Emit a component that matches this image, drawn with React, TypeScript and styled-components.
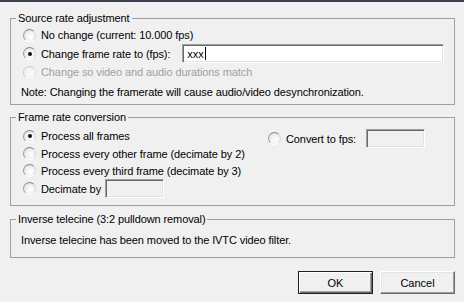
import * as React from "react";
import styled, { createGlobalStyle, css } from "styled-components";

const GlobalStyle = createGlobalStyle`
  html, body {
    margin: 0;
    padding: 0;
    background: #f0f0f0;
  }
  body {
    font-family: "Liberation Sans", Arial, sans-serif;
    font-size: 11px;
    letter-spacing: -0.1px;
    color: #000;
  }
`;

const Dialog = styled.div`
  width: 464px;
  height: 302px;
  box-sizing: border-box;
  border-top: 2px solid #3a4451;
  background: #f0f0f0;
  display: flex;
  flex-direction: column;
`;

const Group = styled.fieldset<{ $top: number }>`
  margin: ${(p) => p.$top}px 9px 0 10px;
  padding: 1px 5px 0 5px;
  border: 1px solid #a0a0a0;
  border-radius: 0;
  min-width: 0;
`;

const Legend = styled.legend`
  padding: 0 2px;
  line-height: 13px;
  font-size: 11px;
`;

const Body = styled.div<{ $pt?: number; $pb: number }>`
  display: flex;
  flex-direction: column;
  padding: ${(p) => p.$pt ?? 0}px 0 ${(p) => p.$pb}px 7px;
`;

const Row = styled.div<{ $h?: number }>`
  display: flex;
  align-items: center;
  height: ${(p) => p.$h ?? 18}px;
`;

const Option = styled.label<{ $disabled?: boolean }>`
  display: flex;
  align-items: center;
  gap: 5px;
  white-space: nowrap;
  color: ${(p) => (p.$disabled ? "#a0a0a0" : "#000")};
`;

const RadioDot = styled.span<{ $checked?: boolean; $disabled?: boolean }>`
  position: relative;
  width: 13px;
  height: 13px;
  box-sizing: border-box;
  border-radius: 50%;
  flex: none;
  border: 1px solid;
  border-color: #8a8a8a #d8d8d8 #ffffff #9a9a9a;
  background: radial-gradient(circle at 60% 60%, #ffffff 0%, #f2f2f2 45%, #d4d4d4 100%);
  ${(p) =>
    p.$disabled &&
    css`
      border-color: #c8c8c8 #e4e4e4 #f8f8f8 #cccccc;
      background: radial-gradient(circle at 60% 60%, #fafafa 0%, #eeeeee 100%);
    `}
  ${(p) =>
    p.$checked &&
    css`
      &::after {
        content: "";
        position: absolute;
        left: 3.5px;
        top: 3.5px;
        width: 4px;
        height: 4px;
        border-radius: 50%;
        background: #111;
      }
    `}
`;

const TextBox = styled.div<{ $w: number; $disabled?: boolean; $ml: number }>`
  width: ${(p) => p.$w}px;
  height: 19px;
  margin-left: ${(p) => p.$ml}px;
  box-sizing: border-box;
  border: 1px solid;
  border-color: #a0a0a0 #ffffff #ffffff #a0a0a0;
  box-shadow: inset 1px 1px 0 #696969, inset -1px -1px 0 #e3e3e3;
  background: ${(p) => (p.$disabled ? "#f0f0f0" : "#ffffff")};
  display: flex;
  align-items: center;
  padding-left: 4px;
`;

const Caret = styled.span`
  display: inline-block;
  width: 1px;
  height: 13px;
  background: #000;
  margin-left: 1px;
`;

const Note = styled.div`
  height: 16px;
  line-height: 16px;
  margin-top: 3px;
  margin-left: -2px;
`;

const Columns = styled.div`
  display: grid;
  grid-template-columns: 245px auto;
`;

const Side = styled(Row)`
  margin-top: 2px;
`;

const Info = styled.div`
  height: 16px;
  line-height: 16px;
  margin-top: 5px;
  padding-left: 5px;
  padding-bottom: 9px;
`;

const Buttons = styled.div`
  display: flex;
  justify-content: flex-end;
  gap: 7px;
  margin: 13px 9px 0 0;
`;

const Button = styled.button<{ $default?: boolean }>`
  width: 75px;
  height: 23px;
  box-sizing: border-box;
  font-family: "Liberation Sans", Arial, sans-serif;
  font-size: 11px;
  color: #000;
  background: #f0f0f0;
  padding: 0;
  border: 1px solid;
  border-color: #ffffff #696969 #696969 #ffffff;
  box-shadow: inset -1px -1px 0 #a0a0a0, inset 1px 1px 0 #e3e3e3;
  ${(p) =>
    p.$default &&
    css`
      border: 1px solid #202020;
      box-shadow: inset 1px 1px 0 #ffffff, inset -1px -1px 0 #696969,
        inset -2px -2px 0 #a0a0a0;
    `}
`;

export default function App() {
  return (
    <>
      <GlobalStyle />
      <Dialog>
        <Group $top={10}>
          <Legend>Source rate adjustment</Legend>
          <Body $pb={4}>
            <Row>
              <Option>
                <RadioDot />
                No change (current: 10.000 fps)
              </Option>
            </Row>
            <Row $h={19}>
              <Option>
                <RadioDot $checked />
                Change frame rate to (fps):
              </Option>
              <TextBox $w={262} $ml={12}>
                xxx
                <Caret />
              </TextBox>
            </Row>
            <Row>
              <Option $disabled>
                <RadioDot $disabled />
                Change so video and audio durations match
              </Option>
            </Row>
            <Note>
              Note: Changing the framerate will cause audio/video
              desynchronization.
            </Note>
          </Body>
        </Group>

        <Group $top={6}>
          <Legend>Frame rate conversion</Legend>
          <Body $pt={2} $pb={7}>
            <Columns>
              <div>
                <Row>
                  <Option>
                    <RadioDot $checked />
                    Process all frames
                  </Option>
                </Row>
                <Row $h={17}>
                  <Option>
                    <RadioDot />
                    Process every other frame (decimate by 2)
                  </Option>
                </Row>
                <Row $h={17}>
                  <Option>
                    <RadioDot />
                    Process every third frame (decimate by 3)
                  </Option>
                </Row>
                <Row $h={19}>
                  <Option>
                    <RadioDot />
                    Decimate by
                  </Option>
                  <TextBox $w={59} $ml={4} $disabled />
                </Row>
              </div>
              <Side $h={19}>
                <Option>
                  <RadioDot />
                  Convert to fps:
                </Option>
                <TextBox $w={59} $ml={10} $disabled />
              </Side>
            </Columns>
          </Body>
        </Group>

        <Group $top={7}>
          <Legend>Inverse telecine (3:2 pulldown removal)</Legend>
          <Info>Inverse telecine has been moved to the IVTC video filter.</Info>
        </Group>

        <Buttons>
          <Button $default>OK</Button>
          <Button>Cancel</Button>
        </Buttons>
      </Dialog>
    </>
  );
}
